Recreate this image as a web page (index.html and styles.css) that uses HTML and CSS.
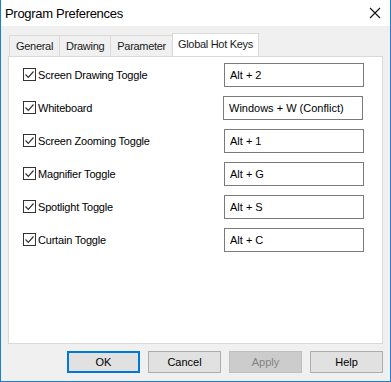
FILE: index.html
```html
<!DOCTYPE html>
<html lang="en">
<head>
  <meta charset="UTF-8">
  <title>Program Preferences</title>
  <link rel="stylesheet" href="styles.css">
</head>
<body>
  <div class="window">
    <div class="titlebar">
      <span class="title">Program Preferences</span>
      <svg class="close" width="12" height="12" viewBox="0 0 12 12"><path d="M1 1L11 11M11 1L1 11" stroke="#111" stroke-width="1.1"/></svg>
    </div>
    <div class="content">
      <!-- Tabs -->
      <div class="tabs">
        <div class="tab">General</div>
        <div class="tab">Drawing</div>
        <div class="tab">Parameter</div>
        <div class="tab active">Global Hot Keys</div>
      </div>
      <div class="panel">
        <div class="row">
          <label class="check"><span class="box"><svg width="11" height="11" viewBox="0 0 11 11"><path d="M1.5 5.5L4.3 8.3L9.5 2.5" fill="none" stroke="#333" stroke-width="1.2"/></svg></span>Screen Drawing Toggle</label>
          <div class="hotkey">Alt + 2</div>
        </div>
        <div class="row">
          <label class="check"><span class="box"><svg width="11" height="11" viewBox="0 0 11 11"><path d="M1.5 5.5L4.3 8.3L9.5 2.5" fill="none" stroke="#333" stroke-width="1.2"/></svg></span>Whiteboard</label>
          <div class="hotkey shifted">Windows + W (Conflict)</div>
        </div>
        <div class="row">
          <label class="check"><span class="box"><svg width="11" height="11" viewBox="0 0 11 11"><path d="M1.5 5.5L4.3 8.3L9.5 2.5" fill="none" stroke="#333" stroke-width="1.2"/></svg></span>Screen Zooming Toggle</label>
          <div class="hotkey">Alt + 1</div>
        </div>
        <div class="row">
          <label class="check"><span class="box"><svg width="11" height="11" viewBox="0 0 11 11"><path d="M1.5 5.5L4.3 8.3L9.5 2.5" fill="none" stroke="#333" stroke-width="1.2"/></svg></span>Magnifier Toggle</label>
          <div class="hotkey">Alt + G</div>
        </div>
        <div class="row">
          <label class="check"><span class="box"><svg width="11" height="11" viewBox="0 0 11 11"><path d="M1.5 5.5L4.3 8.3L9.5 2.5" fill="none" stroke="#333" stroke-width="1.2"/></svg></span>Spotlight Toggle</label>
          <div class="hotkey">Alt + S</div>
        </div>
        <div class="row">
          <label class="check"><span class="box"><svg width="11" height="11" viewBox="0 0 11 11"><path d="M1.5 5.5L4.3 8.3L9.5 2.5" fill="none" stroke="#333" stroke-width="1.2"/></svg></span>Curtain Toggle</label>
          <div class="hotkey">Alt + C</div>
        </div>
      </div>
      <div class="buttons">
        <button class="btn default">OK</button>
        <button class="btn">Cancel</button>
        <button class="btn" disabled>Apply</button>
        <button class="btn">Help</button>
      </div>
    </div>
  </div>
</body>
</html>
```

FILE: styles.css
```css
body {
  margin: 0;
  font-family: "Liberation Sans", Arial, sans-serif;
  font-size: 11px;
  color: #000;
}

.window {
  width: 391px;
  height: 382px;
  box-sizing: border-box;
  border: 1px solid #1a7fd9;
  border-top: none;
  background: #f0f0f0;
  display: flex;
  flex-direction: column;
}

.titlebar {
  height: 26px;
  background: #fff;
  display: flex;
  align-items: center;
  justify-content: space-between;
  padding: 0 9px 0 4px;
}

.title {
  font-family: "Liberation Sans", Arial, sans-serif;
  font-size: 13px;
  letter-spacing: -0.3px;
  color: #000;
}

.content {
  flex: 1;
  padding: 6px 7px 0 7px;
  display: flex;
  flex-direction: column;
}

.tabs {
  display: flex;
  align-items: flex-end;
  height: 24px;
  padding-left: 1px;
}

.tab {
  height: 20px;
  line-height: 21px;
  padding: 0 6px;
  border: 1px solid #d9d9d9;
  border-bottom: none;
  border-right: none;
  background: #f0f0f0;
  color: #1a1a1a;
  letter-spacing: -0.3px;
}

.tab.active {
  height: 23px;
  line-height: 20px;
  background: #fff;
  border-right: 1px solid #d9d9d9;
  margin-bottom: -1px;
  padding: 0 5px;
}

.panel {
  height: 288px;
  background: #fff;
  border: 1px solid #d9d9d9;
  box-sizing: border-box;
  padding: 1px 0 0 14px;
}

.row {
  display: flex;
  align-items: center;
  justify-content: space-between;
  height: 33px;
  padding-right: 18px;
}

.check {
  display: flex;
  align-items: center;
  gap: 2px;
  color: #000;
  letter-spacing: -0.2px;
}

.box {
  width: 11px;
  height: 11px;
  border: 1px solid #333;
  display: flex;
  align-items: center;
  justify-content: center;
}

.hotkey {
  border: 1px solid #7a7a7a;
  padding-left: 5px;
  box-sizing: border-box;
  width: 140px;
  height: 24px;
  line-height: 22px;
}

.hotkey.shifted {
  margin-right: 1px;
}

.buttons {
  display: flex;
  justify-content: flex-end;
  gap: 8px;
  margin-top: 7px;
}

.btn {
  width: 73px;
  height: 22px;
  font-family: "Liberation Sans", Arial, sans-serif;
  font-size: 11px;
  background: #e1e1e1;
  border: 1px solid #adadad;
  color: #000;
  padding: 0;
}

.btn.default {
  border: 2px solid #0078d7;
}

.btn:disabled {
  background: #cccccc;
  border-color: #bfbfbf;
  color: #838383;
}
```
